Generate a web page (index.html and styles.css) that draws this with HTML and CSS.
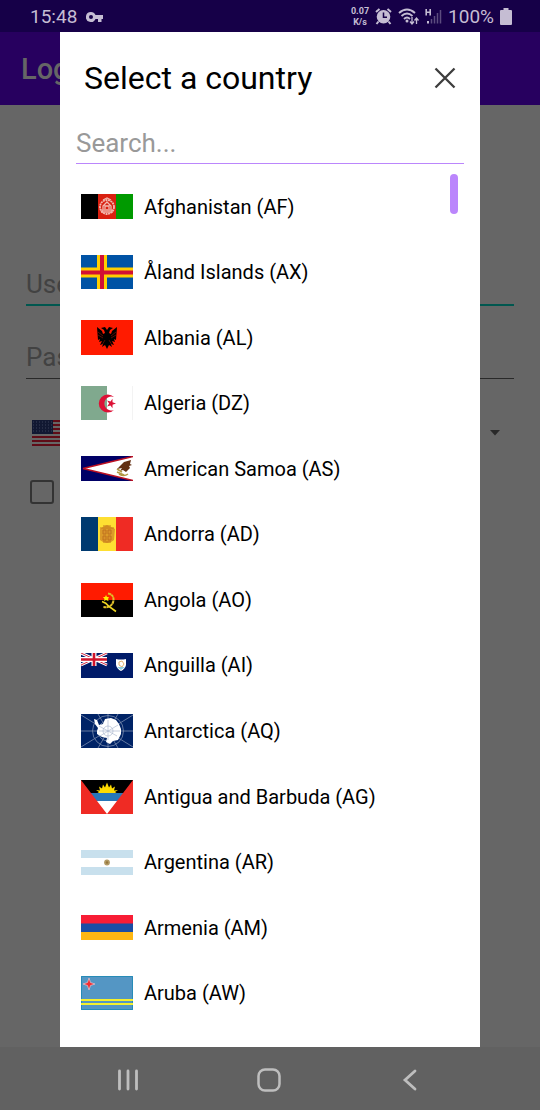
FILE: index.html
```html
<!DOCTYPE html>
<html lang="en">
<head>
<meta charset="utf-8">
<meta name="viewport" content="width=device-width, initial-scale=1">
<title>Select a country</title>
<link rel="stylesheet" href="styles.css">
</head>
<body>
<div class="screen">
  <header class="status">
    <div class="status-group">
      <span>15:48</span>
      <svg width="18" height="12" viewBox="0 0 18 12" fill="currentColor"><path fill-rule="evenodd" d="M5 1a5 5 0 1 0 4.500 7H12v3h3.500V8H17V4H9.500A5 5 0 0 0 5 1zM5 4a2 2 0 1 1 0 4 2 2 0 0 1 0-4z"/></svg>
    </div>
    <div class="status-group status-right">
      <span class="rate"><span>0.07</span><span>K/s</span></span>
      <svg width="17" height="17" viewBox="0 0 17 17"><path d="M1 4l3.500-3M16 4l-3.500-3M3.500 13.500l-2 2.500M13.500 13.500l2 2.500" stroke="currentColor" stroke-width="2"/><circle cx="8.500" cy="8.800" r="6.800" fill="currentColor"/><path d="M8.500 4.500v4.800h3.500" fill="none" stroke="#160048" stroke-width="1.500"/></svg>
      <svg width="21" height="18" viewBox="0 0 21 18" fill="none" stroke="currentColor" stroke-width="1.900"><path d="M1 5q8-7 16 0M3.500 8q5.500-5 11 0M6 11q3-3 6 0"/><circle cx="9" cy="13" r="1.500" fill="currentColor" stroke="none"/><path d="M14 9v7m-2-2.500l2 2.500 2-2.500M18.500 16V10m-2 2.500l2-2.500 2 2.500" stroke-width="1.300"/></svg>
      <svg width="17" height="17" viewBox="0 0 17 17" fill="none" stroke="currentColor"><path d="M1.200 1v6.500M5.200 1v6.500M1 4.200h4" stroke-width="1.600"/><path d="M3 13v2.500" stroke-width="2"/><path d="M6.500 11v4.500M9.500 8v7.500M12.500 5v10.500M15.500 2v13.500" stroke-width="1.500" opacity=".4"/></svg>
      <span>100%</span>
      <svg width="12" height="17" viewBox="0 0 12 17" fill="currentColor"><path d="M3.500 0h5v2H11q1 0 1 1v13q0 1-1 1H1q-1 0-1-1V3q0-1 1-1h2.500z"/></svg>
    </div>
  </header>
  <div class="appbar">Login</div>
  <main class="login">
    <input class="field field-active" type="text" placeholder="Username" aria-label="Username">
    <input class="field" type="password" placeholder="Password" aria-label="Password">
    <button class="country" type="button" aria-label="Country: United States">
      <svg width="52" height="26" viewBox="0 0 52 26"><path fill="#666" d="M0 0h52v26H0z"/><path d="M0 1h52M0 5h52M0 9h52M0 13h52M0 17h52M0 21h52M0 25h52" stroke="#5f0c17" stroke-width="2"/><path fill="#111832" d="M0 0h21v14H0z"/><path d="M1 2h20M1 5h20M1 8h20M1 11h20" stroke="#3b4158" stroke-width="1" stroke-dasharray="1 2"/></svg>
      <svg width="10" height="6" viewBox="0 0 10 6"><path d="M0 0h10L5 5.500z" fill="#292929"/></svg>
    </button>
    <label class="remember"><input type="checkbox"><span>Remember me</span></label>
  </main>
  <nav class="navbar">
    <button type="button" aria-label="Recent apps"><svg width="24" height="24" viewBox="0 0 24 24" fill="none" stroke="currentColor" stroke-width="2.800" stroke-linecap="round"><path d="M3.500 3v18M12 3v18M20.500 3v18"/></svg></button>
    <button type="button" aria-label="Home"><svg width="24" height="24" viewBox="0 0 24 24" fill="none" stroke="currentColor" stroke-width="2.500"><rect x="1.500" y="1.500" width="21" height="21" rx="6.500"/></svg></button>
    <button type="button" aria-label="Back"><svg width="24" height="24" viewBox="0 0 24 24" fill="none" stroke="currentColor" stroke-width="2.800" stroke-linecap="round"><path d="M17 3L7 12 17 21"/></svg></button>
  </nav>

  <section class="dialog" role="dialog" aria-modal="true" aria-labelledby="title">
    <div class="dialog-head">
      <h1 id="title">Select a country</h1>
      <button class="close" type="button" aria-label="Close"><svg width="22" height="22" viewBox="0 0 22 22" fill="none" stroke="#3d3d3d" stroke-width="2.300"><path d="M1.500 1.500l19 19M20.500 1.500l-19 19"/></svg></button>
    </div>
    <input class="search" type="text" placeholder="Search..." aria-label="Search">
    <div class="list-wrap">
      <ul class="list">
        <li><button type="button"><svg width="52" height="25" viewBox="0 0 52 25"><path d="M0 0h18v25H0z"/><path fill="#d92010" d="M17 0h18v25H17z"/><path fill="#009a00" d="M35 0h17v25H35z"/><g fill="none" stroke="#f2b9b0"><circle cx="26" cy="13" r="7" stroke-width="1.800" stroke-dasharray="2 .6"/><path d="M21 16h10v2H21zM22 15v-3l4-4 4 4v3M24 15v-3h4v3M22 6l4-2 4 2" stroke-width="1.300"/></g></svg><span>Afghanistan (AF)</span></button></li>
        <li><button type="button"><svg width="52" height="34" viewBox="0 0 52 34"><path fill="#0053a5" d="M0 0h52v34H0z"/><path d="M21 0v34M0 17.500h52" stroke="#ffce00" stroke-width="10"/><path d="M21 0v34M0 17.500h52" stroke="#d21034" stroke-width="4"/></svg><span>Åland Islands (AX)</span></button></li>
        <li><button type="button"><svg width="52" height="35" viewBox="0 0 52 35"><path fill="#ff1b00" d="M0 0h52v35H0z"/><path d="M26 10l-2-3-4 1 3 2 1 3-2 1-1-3-5-4 1 13 2-1-1 3 3-1-2 4 3-1-1 3 3-2 2 4 2-4 3 2-1-3 3 1-2-4 3 1-1-3 2 1 1-13-5 4-1 3-2-1 1-3 3-2-4-1z"/><path d="M17 12l5 4m-5-1l5 3m13-6l-5 4m5-1l-5 3M24 20l-3 5m7-5l3 5" stroke="#b91605" stroke-width=".5"/></svg><span>Albania (AL)</span></button></li>
        <li><button type="button"><svg width="52" height="34" viewBox="0 0 52 34"><path fill="#fff" d="M0 0h52v34H0z"/><path fill="#80a98e" d="M0 0h26v34H0z"/><path d="M51.500 0v34" stroke="#f3f3f3"/><path fill="#dc1035" d="M33 11A9 9 0 1 0 33 24A7 7 0 1 1 33 11zM35 17.500l-3.500 1.200v3.500l-2-2.800-3.400 1 2-2.900-2-2.900 3.400 1 2-2.800v3.500z"/></svg><span>Algeria (DZ)</span></button></li>
        <li><button type="button"><svg width="52" height="25" viewBox="0 0 52 25"><path fill="#000066" d="M0 0h52v25H0z"/><path fill="#fff" stroke="#bd1021" stroke-width="1.500" d="M54 0L2 12.500 54 25z"/><path fill="#632f12" d="M39 10l4-4 7-2-1 4 2 1-3 1 1 2-4 4-3-2-3 1 2-3-5 1z"/><path d="M36 13l5 3m-3 2q5 3 9 0M36 16l7 3" fill="none" stroke="#b19742" stroke-width="1.500"/></svg><span>American Samoa (AS)</span></button></li>
        <li><button type="button"><svg width="52" height="34" viewBox="0 0 52 34"><path fill="#003a70" d="M0 0h18v34H0z"/><path fill="#fedf32" d="M17 0h18v34H17z"/><path fill="#ef2b24" d="M35 0h17v34H35z"/><path fill="#dc9b29" d="M19 12l3-2 4-2 4 2 4 2-1 11-3 2-4 1-4-1-3-2z"/><path d="M22 13h3v4h-3zM27 13h3v4h-3zM22 19h3v4h-3zM27 19h3v4h-3z" fill="#d9932a" stroke="#c0731f"/><path d="M19 11h14M22 9h8M22 25h8" stroke="#c57a1c" stroke-width="1"/></svg><span>Andorra (AD)</span></button></li>
        <li><button type="button"><svg width="52" height="34" viewBox="0 0 52 34"><path d="M0 0h52v34H0z"/><path fill="#ff1b00" d="M0 0h52v17H0z"/><path d="M27 10.500q6 1 5.500 7-1.500 8-10.500 6.500" fill="none" stroke="#e0c02c" stroke-width="2" stroke-dasharray="3 .4"/><path d="M21 18.500q4 1 7 5l7 5" fill="none" stroke="#f0d820" stroke-width="1.600"/><path fill="#ffec00" d="M25 12l1 2h2l-1 2 .5 2-2.500-1-2 1 .5-2-1.500-2h2z"/></svg><span>Angola (AO)</span></button></li>
        <li><button type="button"><svg width="52" height="25" viewBox="0 0 52 25"><path fill="#001b69" d="M0 0h52v25H0z"/><path d="M0 0l26 12M26 0L0 12" stroke="#fff" stroke-width="3"/><path d="M0 0l26 12M26 0L0 12" stroke="#d22942" stroke-width="1"/><path d="M13 0v13M0 6.500h26" stroke="#fff" stroke-width="5"/><path d="M13 0v13M0 6.500h26" stroke="#cf142b" stroke-width="2.600"/><path fill="#fff" d="M35 6q5 1 10 0v6q-1 4-5 6-4-2-5-6z"/><path fill="#8acde4" d="M36 14h8l-4 3z"/><path d="M38 9l3-1 2 3-2 3-3-2z" fill="none" stroke="#e1b273"/></svg><span>Anguilla (AI)</span></button></li>
        <li><button type="button"><svg width="52" height="34" viewBox="0 0 52 34"><path fill="#002366" d="M0 0h52v34H0z"/><g fill="none" stroke="#7b8daf" stroke-width=".8"><circle cx="27" cy="17" r="10"/><circle cx="27" cy="17" r="15.500"/><path d="M0 17h52M27 0v34M0 1l52 32M0 33L52 1M17 0l20 34M37 0L17 34"/></g><path fill="#fff" d="M13 5l3 1 2 5 4-1 2-5 6-1 5 2 3 4 2 5 0 5-3 6-5 1-3 3-4-2 1-4-5-1-5-3 0-3 1-3-3-4z"/><g fill="none" stroke="#a3b0c9" stroke-width=".6"><path d="M18 12l18 10M19 22l18-11M27 6v20M18 17h21"/><circle cx="27" cy="17" r="5"/></g></svg><span>Antarctica (AQ)</span></button></li>
        <li><button type="button"><svg width="52" height="34" viewBox="0 0 52 34"><path d="M0 0h52v34H0z"/><path fill="#ffdb00" d="M15 14l3-2-3-2 4 .5-1-4 3 2 1-4 2 3 2-5 2 5 2-3 1 4 3-2-1 4 4-.5-3 2 3 2z"/><path fill="#2877b8" d="M0 13h52v8H0z"/><path fill="#fff" d="M0 21h52v13H0z"/><path fill="#ef2b24" d="M0 0l26 34H0zM52 0L26 34h26z"/></svg><span>Antigua and Barbuda (AG)</span></button></li>
        <li><button type="button"><svg width="52" height="25" viewBox="0 0 52 25"><path fill="#c8e0ed" d="M0 0h52v25H0z"/><path fill="#fff" d="M0 8h52v9H0z"/><circle cx="26" cy="12.500" r="2.900" fill="#b29b66"/><circle cx="26" cy="12.500" r="1.200" fill="#96763b"/></svg><span>Argentina (AR)</span></button></li>
        <li><button type="button"><svg width="52" height="25" viewBox="0 0 52 25"><path fill="#f81d35" d="M0 0h52v9H0z"/><path fill="#1b4ea5" d="M0 8.500h52V17H0z"/><path fill="#fdb713" d="M0 17h52v8H0z"/></svg><span>Armenia (AM)</span></button></li>
        <li><button type="button"><svg width="52" height="34" viewBox="0 0 52 34"><path fill="#5496c4" d="M0 0h52v34H0z"/><path d="M.5.500h51v33H.5z" fill="none" stroke="#278bb7"/><path d="M0 24h52M0 28h52" stroke="#f4f02d" stroke-width="2"/><path d="M8 2l1.500 4.500L14 8 9.500 9.500 8 14 6.500 9.500 2 8l4.500-1.500z" fill="#f42d32" stroke="#e4c9d2" stroke-width=".7"/></svg><span>Aruba (AW)</span></button></li>
      </ul>
      <div class="thumb"></div>
    </div>
  </section>
</div>
</body>
</html>
```
FILE: styles.css
```css
* {
  box-sizing: border-box;
}

body {
  margin: 0;
  font-family: Roboto, "Noto Sans", sans-serif;
  background: #666;
}

button,
input {
  font: inherit;
}

button {
  margin: 0;
  padding: 0;
  border: 0;
  background: none;
  color: inherit;
  text-align: left;
}

svg {
  display: block;
  flex: none;
}

.screen {
  position: relative;
  display: flex;
  flex-direction: column;
  min-height: 100vh;
}

.status {
  display: flex;
  justify-content: space-between;
  align-items: center;
  height: 32px;
  padding: 1px 28px 0 30px;
  background: #160048;
  color: #c5bdd3;
  font-size: 19px;
}

.status-group {
  display: flex;
  align-items: center;
  gap: 9px;
}

.status-right {
  gap: 6px;
}

.rate {
  display: flex;
  flex-direction: column;
  align-items: center;
  font-size: 9px;
  line-height: 11px;
  font-weight: 700;
}

.appbar {
  display: flex;
  align-items: center;
  height: 73px;
  padding: 0 21px;
  background: #27005f;
  color: #666;
  font-size: 29px;
  font-weight: 500;
}

.login {
  flex: 1;
  display: flex;
  flex-direction: column;
  padding: 153px 26px 0;
}

.field {
  width: 100%;
  height: 48px;
  margin-bottom: 25px;
  padding: 5px 0 0;
  border: 0;
  border-bottom: 1px solid #292929;
  background: none;
  font-size: 26px;
}

.field-active {
  border-bottom: 2px solid #00574f;
}

.field::placeholder {
  color: #424242;
  opacity: 1;
}

.country {
  display: flex;
  align-items: center;
  justify-content: space-between;
  height: 58px;
  padding: 0 14px 0 6px;
}

.remember {
  display: flex;
  align-items: center;
  gap: 12px;
  padding: 18px 4px 0;
  color: #292929;
  font-size: 20px;
}

.remember input {
  appearance: none;
  width: 24px;
  height: 24px;
  margin: 0;
  border: 2px solid #333;
  border-radius: 3px;
}

.navbar {
  display: flex;
  align-items: center;
  justify-content: space-between;
  height: 63px;
  padding: 3px 118px 0 116px;
  background: #616161;
  color: #bebebe;
}

.dialog {
  position: absolute;
  inset: 32px 60px 63px;
  display: flex;
  flex-direction: column;
  padding: 0 16px 21px;
  background: #fff;
  color: #000;
}

.dialog-head {
  display: flex;
  align-items: center;
  justify-content: space-between;
  height: 91px;
  padding: 0 8px;
}

.dialog-head h1 {
  margin: 0;
  font-size: 32px;
  font-weight: 400;
}

.search {
  width: 100%;
  height: 41px;
  padding: 0 0 1px;
  border: 0;
  border-bottom: 1px solid #bb86fc;
  background: none;
  font-size: 26px;
  outline: 0;
}

.search::placeholder {
  color: #999;
  opacity: 1;
}

.list-wrap {
  position: relative;
  flex: 1;
  display: flex;
  padding-top: 10px;
}

.list {
  flex: 1;
  display: flex;
  flex-direction: column;
  margin: 0;
  padding: 0;
  list-style: none;
}

.list li {
  flex: 1;
  display: flex;
}

.list button {
  flex: 1;
  display: flex;
  align-items: center;
  gap: 11px;
  padding: 0 5px;
  font-size: 20px;
}

.thumb {
  position: absolute;
  top: 10px;
  right: 6px;
  width: 8px;
  height: 40px;
  border-radius: 4px;
  background: #bb86fc;
}
```
